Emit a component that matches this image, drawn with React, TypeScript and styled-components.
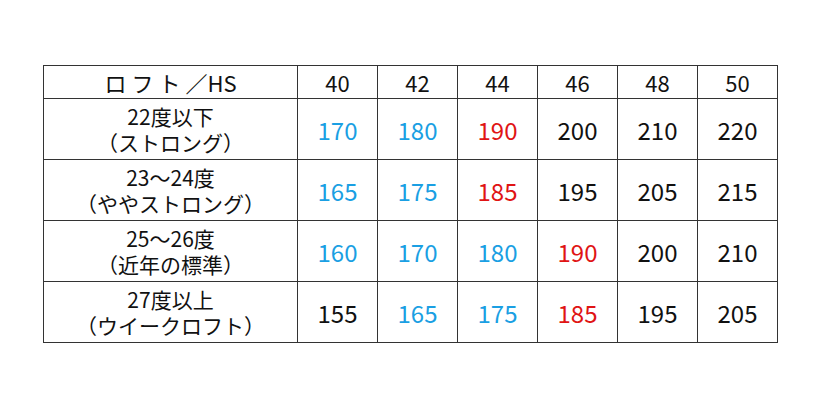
import styled, { createGlobalStyle } from "styled-components";

const GlobalStyle = createGlobalStyle`
  html, body {
    margin: 0;
    padding: 0;
    background: #ffffff;
  }
  body {
    font-family: "Noto Sans CJK JP", "Noto Sans", sans-serif;
    color: #111;
  }
`;

type Tone = "blue" | "red" | "black";

const toneColor: Record<Tone, string> = {
  blue: "#1a9fe3",
  red: "#e01414",
  black: "#111111",
};

const rows: { loft: string; note: string; values: [number, Tone][] }[] = [
  {
    loft: "22度以下",
    note: "（ストロング）",
    values: [
      [170, "blue"],
      [180, "blue"],
      [190, "red"],
      [200, "black"],
      [210, "black"],
      [220, "black"],
    ],
  },
  {
    loft: "23〜24度",
    note: "（ややストロング）",
    values: [
      [165, "blue"],
      [175, "blue"],
      [185, "red"],
      [195, "black"],
      [205, "black"],
      [215, "black"],
    ],
  },
  {
    loft: "25〜26度",
    note: "（近年の標準）",
    values: [
      [160, "blue"],
      [170, "blue"],
      [180, "blue"],
      [190, "red"],
      [200, "black"],
      [210, "black"],
    ],
  },
  {
    loft: "27度以上",
    note: "（ウイークロフト）",
    values: [
      [155, "black"],
      [165, "blue"],
      [175, "blue"],
      [185, "red"],
      [195, "black"],
      [205, "black"],
    ],
  },
];

const speeds = [40, 42, 44, 46, 48, 50];

const Page = styled.div`
  padding: 65px 0 0 43px;
`;

const Table = styled.table`
  border-collapse: collapse;
  table-layout: fixed;
  width: 734px;
`;

const HeadCell = styled.th<{ $first?: boolean }>`
  border: 1px solid #333;
  height: 32px;
  padding: 0;
  width: ${(p) => (p.$first ? "253px" : "79px")};
  font-weight: normal;
  font-size: 22px;
  line-height: 1;
  text-align: center;
  color: #111;
`;

const Kana = styled.span`
  letter-spacing: 5px;
`;

const LabelCell = styled.td`
  border: 1px solid #333;
  height: 60px;
  padding: 0;
  text-align: center;
  font-size: 21px;
  line-height: 26px;
  color: #111;
`;

const Line = styled.div`
  white-space: nowrap;
`;

const ValueCell = styled.td<{ $tone: Tone }>`
  border: 1px solid #333;
  padding: 0;
  text-align: center;
  font-size: 24px;
  color: ${(p) => toneColor[p.$tone]};
`;

export default function App() {
  return (
    <>
      <GlobalStyle />
      <Page>
        <Table>
          <thead>
            <tr>
              <HeadCell $first>
                <Kana>ロフト</Kana>／HS
              </HeadCell>
              {speeds.map((s) => (
                <HeadCell key={s}>{s}</HeadCell>
              ))}
            </tr>
          </thead>
          <tbody>
            {rows.map((r) => (
              <tr key={r.loft}>
                <LabelCell>
                  <Line>{r.loft}</Line>
                  <Line>{r.note}</Line>
                </LabelCell>
                {r.values.map(([v, tone], i) => (
                  <ValueCell key={i} $tone={tone}>
                    {v}
                  </ValueCell>
                ))}
              </tr>
            ))}
          </tbody>
        </Table>
      </Page>
    </>
  );
}
